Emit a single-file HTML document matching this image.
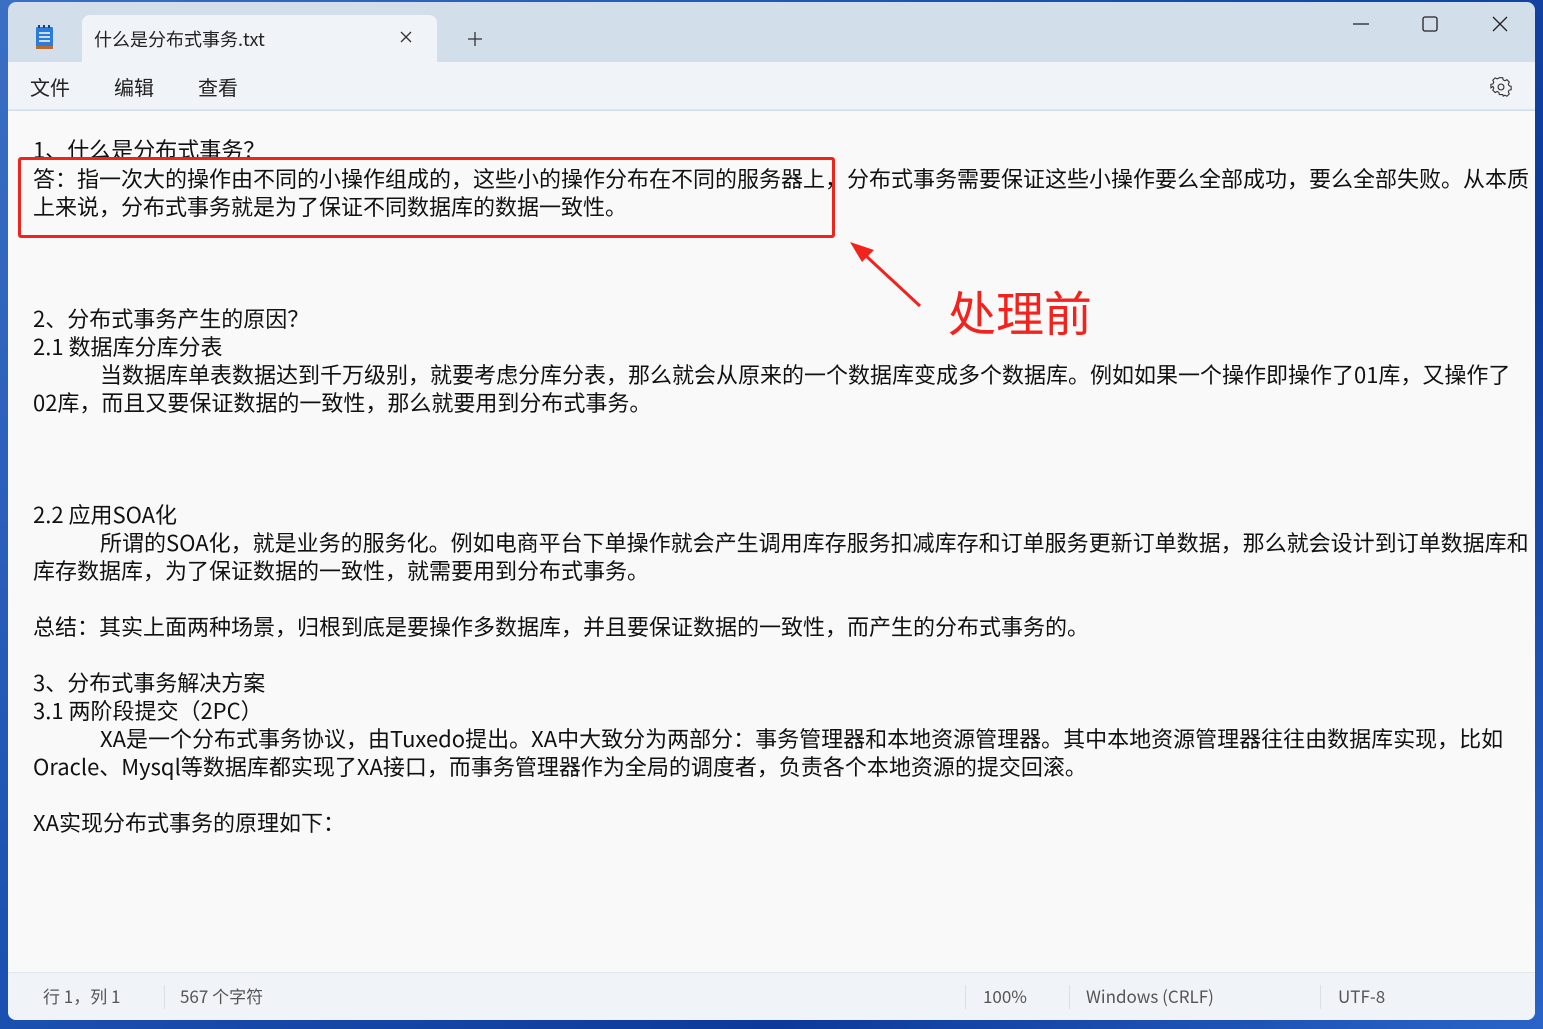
<!DOCTYPE html>
<html><head><meta charset="utf-8"><style>
*{margin:0;padding:0;box-sizing:border-box}
body{width:1543px;height:1029px;overflow:hidden;position:relative;background:linear-gradient(135deg,#3a6fc4,#1b4fb0 40%,#0d3a9a 70%,#2a64c8);font-family:"Liberation Sans","Noto Sans CJK SC",sans-serif}
.win{position:absolute;left:8px;top:2px;width:1527px;height:1018px;background:#d3deeb;border-radius:8px;overflow:hidden}
.tab{position:absolute;left:74px;top:13px;width:355px;height:47px;background:#f0f3f8;border-radius:8px 8px 0 0}
.menu{position:absolute;left:0;top:60px;width:1527px;height:48px;background:#f0f3f8;border-bottom:1px solid #e2e5ea}
.content{position:absolute;left:0;top:109px;width:1527px;height:861px;background:#f9f9f9;overflow:hidden}
.status{position:absolute;left:0;top:970px;width:1527px;height:48px;background:#f0f3f8;border-top:1px solid #e3e6ea;font-size:17px;color:#555}
.l{position:absolute;left:25px;white-space:nowrap;font-size:22px;line-height:28px;color:#111;font-family:"Noto Sans CJK SC","Liberation Sans",sans-serif}
.ind{left:92px}
.m{position:absolute;top:10px;font-size:20px;color:#222;font-family:"Noto Sans CJK SC",sans-serif}
.s{position:absolute;top:10px;font-family:"Noto Sans CJK SC","Liberation Sans",sans-serif;font-size:17px}
.sep{position:absolute;top:12px;width:1px;height:24px;background:#dcdfe4}
</style></head><body>
<div class="win">
 <svg style="position:absolute;left:26px;top:22px" width="22" height="28" viewBox="0 0 22 28"><rect x="2" y="3" width="17" height="20" fill="#2b7bd8" rx="1"/><rect x="2" y="22" width="17" height="3" fill="#b86a30"/><g stroke="#fff" stroke-width="1.5"><line x1="5" y1="9" x2="16" y2="9"/><line x1="5" y1="13" x2="16" y2="13"/><line x1="5" y1="17" x2="16" y2="17"/></g><g fill="#1a3f7a"><rect x="4" y="1" width="2" height="3"/><rect x="9" y="1" width="2" height="3"/><rect x="14" y="1" width="2" height="3"/></g></svg>
 <div class="tab"></div>
 <div style="position:absolute;left:86px;top:24px;font-size:18px;color:#222;font-family:'Noto Sans CJK SC',sans-serif">什么是分布式事务.txt</div>
 <svg style="position:absolute;left:392px;top:29px" width="12" height="12"><path d="M1 1L11 11M11 1L1 11" stroke="#333" stroke-width="1.3"/></svg>
 <svg style="position:absolute;left:460px;top:30px" width="14" height="14"><path d="M7 0V14M0 7H14" stroke="#333" stroke-width="1.3"/></svg>
 <svg style="position:absolute;left:1345px;top:21px" width="16" height="2"><path d="M0 1H16" stroke="#222" stroke-width="1.2"/></svg>
 <svg style="position:absolute;left:1414px;top:14px" width="16" height="16"><rect x="1" y="1" width="14" height="14" rx="2" fill="none" stroke="#222" stroke-width="1.3"/></svg>
 <svg style="position:absolute;left:1484px;top:14px" width="16" height="16"><path d="M1 1L15 15M15 1L1 15" stroke="#222" stroke-width="1.3"/></svg>
 <div class="menu">
  <div class="m" style="left:22px">文件</div>
  <div class="m" style="left:106px">编辑</div>
  <div class="m" style="left:190px">查看</div>
  <svg style="position:absolute;left:1482px;top:14px" width="22" height="22" viewBox="0 0 24 24"><path d="M10 2h4l.6 2.6 2 1 2.4-1.2 2.8 2.8-1.2 2.4 1 2 2.4.6v4l-2.4.6-1 2 1.2 2.4-2.8 2.8-2.4-1.2-2 1L14 22h-4l-.6-2.6-2-1-2.4 1.2-2.8-2.8 1.2-2.4-1-2L0 14v-4l2.4-.6 1-2L2.2 5 5 2.2l2.4 1.2 2-1z" fill="none" stroke="#333" stroke-width="1.3" transform="translate(1 0) scale(.92)"/><circle cx="12" cy="12" r="3.2" fill="none" stroke="#333" stroke-width="1.3"/></svg>
 </div>
 <div class="content">
  <div class="l" style="top:24px">1、什么是分布式事务？</div>
  <div class="l" style="top:53px">答：指一次大的操作由不同的小操作组成的，这些小的操作分布在不同的服务器上，分布式事务需要保证这些小操作要么全部成功，要么全部失败。从本质</div>
  <div class="l" style="top:81px">上来说，分布式事务就是为了保证不同数据库的数据一致性。</div>
  <div class="l" style="top:193px">2、分布式事务产生的原因？</div>
  <div class="l" style="top:221px">2.1 数据库分库分表</div>
  <div class="l ind" style="top:249px">当数据库单表数据达到千万级别，就要考虑分库分表，那么就会从原来的一个数据库变成多个数据库。例如如果一个操作即操作了01库，又操作了</div>
  <div class="l" style="top:277px">02库，而且又要保证数据的一致性，那么就要用到分布式事务。</div>
  <div class="l" style="top:389px">2.2 应用SOA化</div>
  <div class="l ind" style="top:417px">所谓的SOA化，就是业务的服务化。例如电商平台下单操作就会产生调用库存服务扣减库存和订单服务更新订单数据，那么就会设计到订单数据库和</div>
  <div class="l" style="top:445px">库存数据库，为了保证数据的一致性，就需要用到分布式事务。</div>
  <div class="l" style="top:501px">总结：其实上面两种场景，归根到底是要操作多数据库，并且要保证数据的一致性，而产生的分布式事务的。</div>
  <div class="l" style="top:557px">3、分布式事务解决方案</div>
  <div class="l" style="top:585px">3.1 两阶段提交（2PC）</div>
  <div class="l ind" style="top:613px">XA是一个分布式事务协议，由Tuxedo提出。XA中大致分为两部分：事务管理器和本地资源管理器。其中本地资源管理器往往由数据库实现，比如</div>
  <div class="l" style="top:641px">Oracle、Mysql等数据库都实现了XA接口，而事务管理器作为全局的调度者，负责各个本地资源的提交回滚。</div>
  <div class="l" style="top:697px">XA实现分布式事务的原理如下：</div>
 </div>
 <div style="position:absolute;left:10px;top:155px;width:817px;height:81px;border:3px solid #f2221c;border-radius:3px"></div>
 <svg style="position:absolute;left:830px;top:230px" width="100" height="90"><path d="M82 74L26 22" stroke="#f2221c" stroke-width="3"/><path d="M12 10L36 18L24 30Z" fill="#f2221c"/></svg>
 <div style="position:absolute;left:940px;top:276px;font-size:48px;color:#f2221c;font-family:'Noto Sans CJK SC',sans-serif;line-height:64px">处理前</div>
 <div class="status">
  <div class="s" style="left:35px">行 1，列 1</div>
  <div class="sep" style="left:156px"></div>
  <div class="s" style="left:172px">567 个字符</div>
  <div class="sep" style="left:957px"></div>
  <div class="s" style="left:975px">100%</div>
  <div class="sep" style="left:1061px"></div>
  <div class="s" style="left:1078px">Windows (CRLF)</div>
  <div class="sep" style="left:1312px"></div>
  <div class="s" style="left:1330px">UTF-8</div>
 </div>
</div>
</body></html>
